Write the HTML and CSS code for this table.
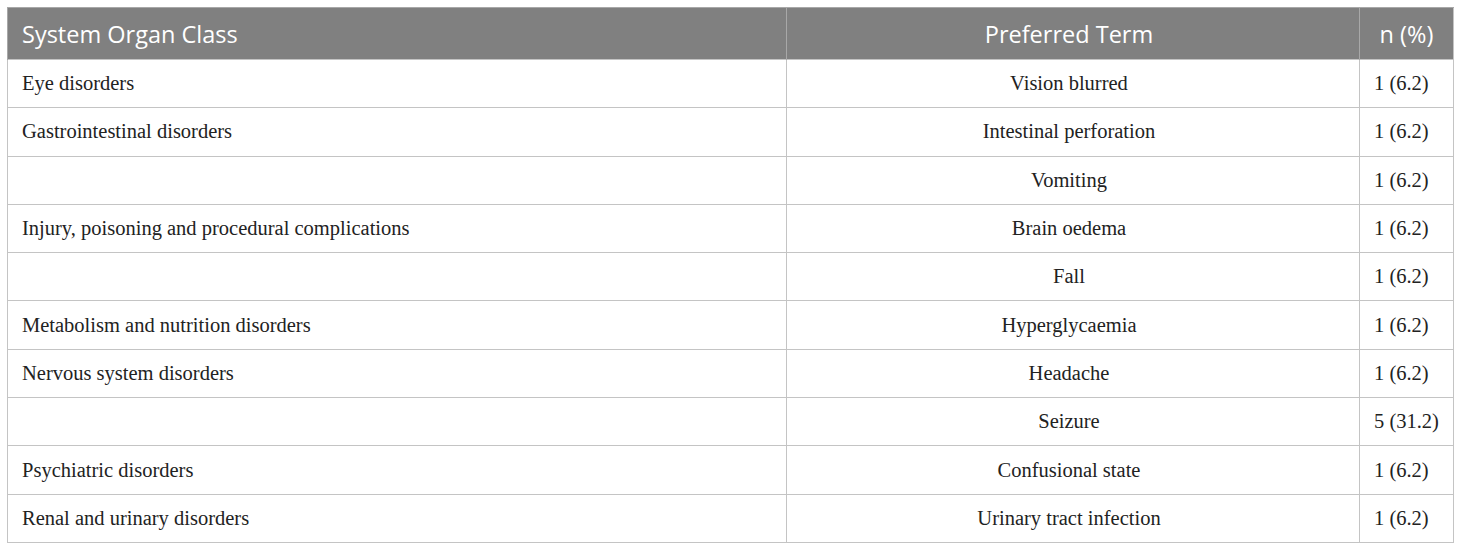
FILE: index.html
```html
<!DOCTYPE html>
<html>
<head>
<meta charset="utf-8">
<link rel="stylesheet" href="styles.css">
</head>
<body>
<table class="ae-table">
  <colgroup>
    <col class="c1"><col class="c2"><col class="c3">
  </colgroup>
  <thead>
    <tr><th class="left">System Organ Class</th><th class="term">Preferred Term</th><th class="center">n (%)</th></tr>
  </thead>
  <tbody>
    <tr><td>Eye disorders</td><td class="term">Vision blurred</td><td>1 (6.2)</td></tr>
    <tr><td>Gastrointestinal disorders</td><td class="term">Intestinal perforation</td><td>1 (6.2)</td></tr>
    <tr><td></td><td class="term">Vomiting</td><td>1 (6.2)</td></tr>
    <tr><td>Injury, poisoning and procedural complications</td><td class="term">Brain oedema</td><td>1 (6.2)</td></tr>
    <tr><td></td><td class="term">Fall</td><td>1 (6.2)</td></tr>
    <tr><td>Metabolism and nutrition disorders</td><td class="term">Hyperglycaemia</td><td>1 (6.2)</td></tr>
    <tr><td>Nervous system disorders</td><td class="term">Headache</td><td>1 (6.2)</td></tr>
    <tr><td></td><td class="term">Seizure</td><td>5 (31.2)</td></tr>
    <tr><td>Psychiatric disorders</td><td class="term">Confusional state</td><td>1 (6.2)</td></tr>
    <tr><td>Renal and urinary disorders</td><td class="term">Urinary tract infection</td><td>1 (6.2)</td></tr>
  </tbody>
</table>
</body>
</html>
```
FILE: styles.css
```css
html, body { margin: 0; padding: 0; background: #fff; }
body { padding: 7px 7px 0 7px; }
.ae-table {
  width: 1446px;
  border-collapse: collapse;
  table-layout: fixed;
  border: 1px solid #c4c4c4;
}
.c1 { width: 779px; }
.c2 { width: 573px; }
.c3 { width: 94px; }
.ae-table th {
  background: #808080;
  color: #fff;
  font-family: "Open Sans", "Noto Sans", sans-serif;
  font-weight: 400;
  font-size: 23.5px;
  height: 52px;
  padding: 0 14px;
  border-left: 1px solid #a8a8a8;
  border-top: 1px solid #a8a8a8;
  box-sizing: border-box;
}
.ae-table td {
  font-family: "Liberation Serif", "Times New Roman", serif;
  font-size: 20.5px;
  color: #222;
  height: 48.3px;
  padding: 0 14px;
  border: 1px solid #c4c4c4;
  box-sizing: border-box;
}
.left { text-align: left; }
.center { text-align: center; }
.ae-table .term { text-align: center; padding-left: 10px; padding-right: 18px; }
```
